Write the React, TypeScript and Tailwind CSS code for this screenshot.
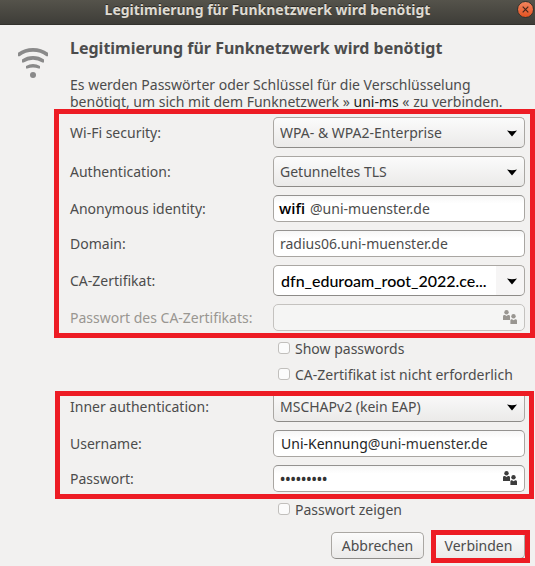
import type { ReactNode } from "react";

const fieldFrame =
  "rounded-[5px] border border-[#a9a6a2] border-t-[#949290] bg-linear-to-b from-[#f6f6f6] to-white to-30% text-[#4c4c4c]";

function Row({ id, label, muted, children }: { id: string; label: string; muted?: boolean; children: ReactNode }) {
  return (
    <div className="flex items-center">
      <label htmlFor={id} className={`w-[203px] shrink-0 whitespace-nowrap ${muted ? "text-[#999691]" : ""}`}>
        {label}
      </label>
      <div className="min-w-0 flex-1">{children}</div>
    </div>
  );
}

function Choice({ id, value }: { id: string; value: string }) {
  return (
    <div className="relative h-[31px]">
      <select
        id={id}
        className="h-full w-full appearance-none rounded-[5px] border border-[#aaa7a3] border-b-[#8d8b88] bg-linear-to-b from-[#fbfbfb] to-[#ebeae9] pl-[6px] text-[#4c4c4c]"
      >
        <option>{value}</option>
      </select>
      <Arrow />
    </div>
  );
}

function Arrow() {
  return (
    <svg className="pointer-events-none absolute top-[13px] right-[8px]" width="10" height="7" viewBox="0 0 10 7" aria-hidden="true">
      <path d="M0 .5C3 1.4 7 1.4 10 .5L5 6.5Z" fill="#000" />
    </svg>
  );
}

function People({ className }: { className: string }) {
  return (
    <svg className={className} width="14" height="14" viewBox="0 0 14 14" fill="currentColor" aria-hidden="true">
      <circle cx="3.5" cy="2.2" r="2.2" />
      <path d="M0 10V6.4Q0 5 1.4 5H2L3.5 6L5 5H5.6Q7 5 7 6.4V10Z" />
      <circle cx="10.5" cy="6.2" r="2.2" />
      <path d="M7.4 14V10.6Q7.4 9.2 8.6 9.2H9L10.6 10.2L12.2 9.2Q14 9.2 14 10.6V14Z" />
    </svg>
  );
}

function Check({ label }: { label: string }) {
  return (
    <label className="ml-[208px] flex h-[18px] items-center gap-[5px] whitespace-nowrap">
      <input type="checkbox" className="size-[12px] appearance-none rounded-[3px] border border-[#c1bfbc] bg-[#fbfbfb]" />
      {label}
    </label>
  );
}

export default function App() {
  return (
    <main className="min-h-[566px] bg-[#f2f1f0] font-['Noto_Sans',sans-serif] text-[14px] leading-[17px] text-[#4c4c4c]">
      <header className="flex h-[25px] items-center border-b border-[#33322d] bg-linear-to-b from-[#55534b] to-[#3e3d38] pr-[1px] pb-[5px]">
        <div className="flex-1 text-center text-[14px] font-bold whitespace-nowrap text-[#dfdbd2] [text-shadow:0_-1px_#2b2a26]">
          <span className="pl-[18px]">Legitimierung für Funknetzwerk wird benötigt</span>
        </div>
        <button aria-label="Schließen" className="flex size-[17px] items-center justify-center rounded-full border border-[#33322d] bg-linear-to-b from-[#f4845c] to-[#e2521f]">
          <svg width="7" height="7" viewBox="0 0 7 7" aria-hidden="true">
            <path d="M.7.7l5.6 5.6M6.3.7L.7 6.3" stroke="#45261a" strokeWidth="1.2" />
          </svg>
        </button>
      </header>

      <div className="px-[10px] pb-[7px] pl-[18px]">
        <section className="flex gap-[22px]">
          <svg className="mt-[22px] shrink-0" width="30" height="31" viewBox="0 0 30 31" fill="#8a8a8a" aria-hidden="true">
            <path d="M0 5.8Q6.5 1 15 1T30 5.8V9.2H28.4Q22.5 4.8 15 4.8T1.6 9.2H0Z" />
            <path d="M4 12.4Q9 9 15 9T26 12.4V15.5H24.4Q20 12.8 15 12.8T5.6 15.5H4Z" />
            <path d="M8 19Q11.5 17 15 17T22 19V21.6H20.6Q18 20.6 15 20.6T9.4 21.6H8Z" />
            <circle cx="15" cy="28" r="3" />
          </svg>
          <div className="min-w-0">
            <h1 className="pt-[13px] text-[16px] leading-[20px] font-bold whitespace-nowrap">
              Legitimierung für Funknetzwerk wird benötigt
            </h1>
            <p className="pt-[18px] whitespace-nowrap">
              Es werden Passwörter oder Schlüssel für die Verschlüsselung
              <br />
              benötigt, um sich mit dem Funknetzwerk »{" "}
              <span className="text-[#222]">uni-ms</span> « zu verbinden.
            </p>
          </div>
        </section>

        <form className="pt-[7px] pl-[52px]" onSubmit={(e) => e.preventDefault()}>
          <div className="relative flex flex-col gap-[8px]">
            <Row id="security" label="Wi-Fi security:">
              <Choice id="security" value="WPA- & WPA2-Enterprise" />
            </Row>
            <Row id="auth" label="Authentication:">
              <Choice id="auth" value="Getunneltes TLS" />
            </Row>
            <Row id="anon" label="Anonymous identity:">
              <div className={`flex h-[27px] items-center gap-[5px] pl-[5px] ${fieldFrame}`}>
                <span className="font-['Open_Sans',sans-serif] text-[15px] font-semibold text-black">wifi</span>
                <input id="anon" defaultValue="@uni-muenster.de" className="min-w-0 flex-1 bg-transparent outline-none" />
              </div>
            </Row>
            <Row id="domain" label="Domain:">
              <div className={`flex h-[27px] items-center pl-[6px] ${fieldFrame}`}>
                <input id="domain" defaultValue="radius06.uni-muenster.de" className="min-w-0 flex-1 bg-transparent outline-none" />
              </div>
            </Row>
            <Row id="cert" label="CA-Zertifikat:">
              <div className="relative h-[31px]">
                <select
                  id="cert"
                  className="h-full w-full appearance-none rounded-[5px] border border-[#aaa7a3] border-b-[#8d8b88] bg-linear-to-r from-white from-89% to-[#f6f5f5] to-89% pb-[1px] pl-[7px] font-['Lato',sans-serif] text-[16px] font-medium text-black"
                >
                  <option>dfn_eduroam_root_2022.ce...</option>
                </select>
                <Arrow />
              </div>
            </Row>
            <Row id="certpw" label="Passwort des CA-Zertifikats:" muted>
              <div className="flex h-[27px] items-center rounded-[5px] border border-[#c4c2bf] bg-[#f5f5f4] pr-[7px] pb-[1px] pl-[6px]">
                <input id="certpw" type="password" disabled className="min-w-0 flex-1 bg-transparent" />
                <People className="text-[#999691]" />
              </div>
            </Row>
            <div className="pointer-events-none absolute -top-[8px] -right-[10px] -bottom-[7px] -left-[16px] border-[5px] border-[#ed1c24]" />
          </div>

          <div className="flex flex-col gap-[8px] py-[8px]">
            <Check label="Show passwords" />
            <Check label="CA-Zertifikat ist nicht erforderlich" />
          </div>

          <div className="relative flex flex-col gap-[8px]">
            <Row id="inner" label="Inner authentication:">
              <Choice id="inner" value="MSCHAPv2 (kein EAP)" />
            </Row>
            <Row id="user" label="Username:">
              <div className={`flex h-[27px] items-center pl-[7px] ${fieldFrame}`}>
                <span className="text-[14px] text-[#222]">Uni-Kennung</span>
                <input id="user" defaultValue="@uni-muenster.de" className="min-w-0 flex-1 bg-transparent text-[#333] outline-none" />
              </div>
            </Row>
            <Row id="pw" label="Passwort:">
              <div className={`flex h-[27px] items-center pr-[7px] pb-[1px] pl-[6px] ${fieldFrame}`}>
                <input id="pw" type="password" defaultValue="muenster1" className="min-w-0 flex-1 bg-transparent font-semibold text-[#333] outline-none" />
                <People className="text-[#3c3c3c]" />
              </div>
            </Row>
            <div className="pointer-events-none absolute top-0 -right-[9px] -bottom-[7px] -left-[15px] border-[5px] border-[#ed1c24]" />
          </div>

          <div className="pt-[8px]">
            <Check label="Passwort zeigen" />
          </div>

          <div className="flex justify-end gap-[8px] pt-[14px]">
            <button type="button" className="h-[27px] w-[93px] rounded-[5px] border border-[#aaa7a3] border-b-[#8d8b88] bg-linear-to-b from-[#fbfbfb] to-[#ebeae9]">
              Abbrechen
            </button>
            <div className="relative">
              <button type="submit" className="h-[27px] w-[93px] rounded-[5px] border border-[#aaa7a3] border-b-[#8d8b88] bg-linear-to-b from-[#fbfbfb] to-[#ebeae9]">
                Verbinden
              </button>
              <div className="pointer-events-none absolute -top-[2px] -right-[5px] -bottom-[4px] -left-[1px] border-[5px] border-[#ed1c24]" />
            </div>
          </div>
        </form>
      </div>
    </main>
  );
}
